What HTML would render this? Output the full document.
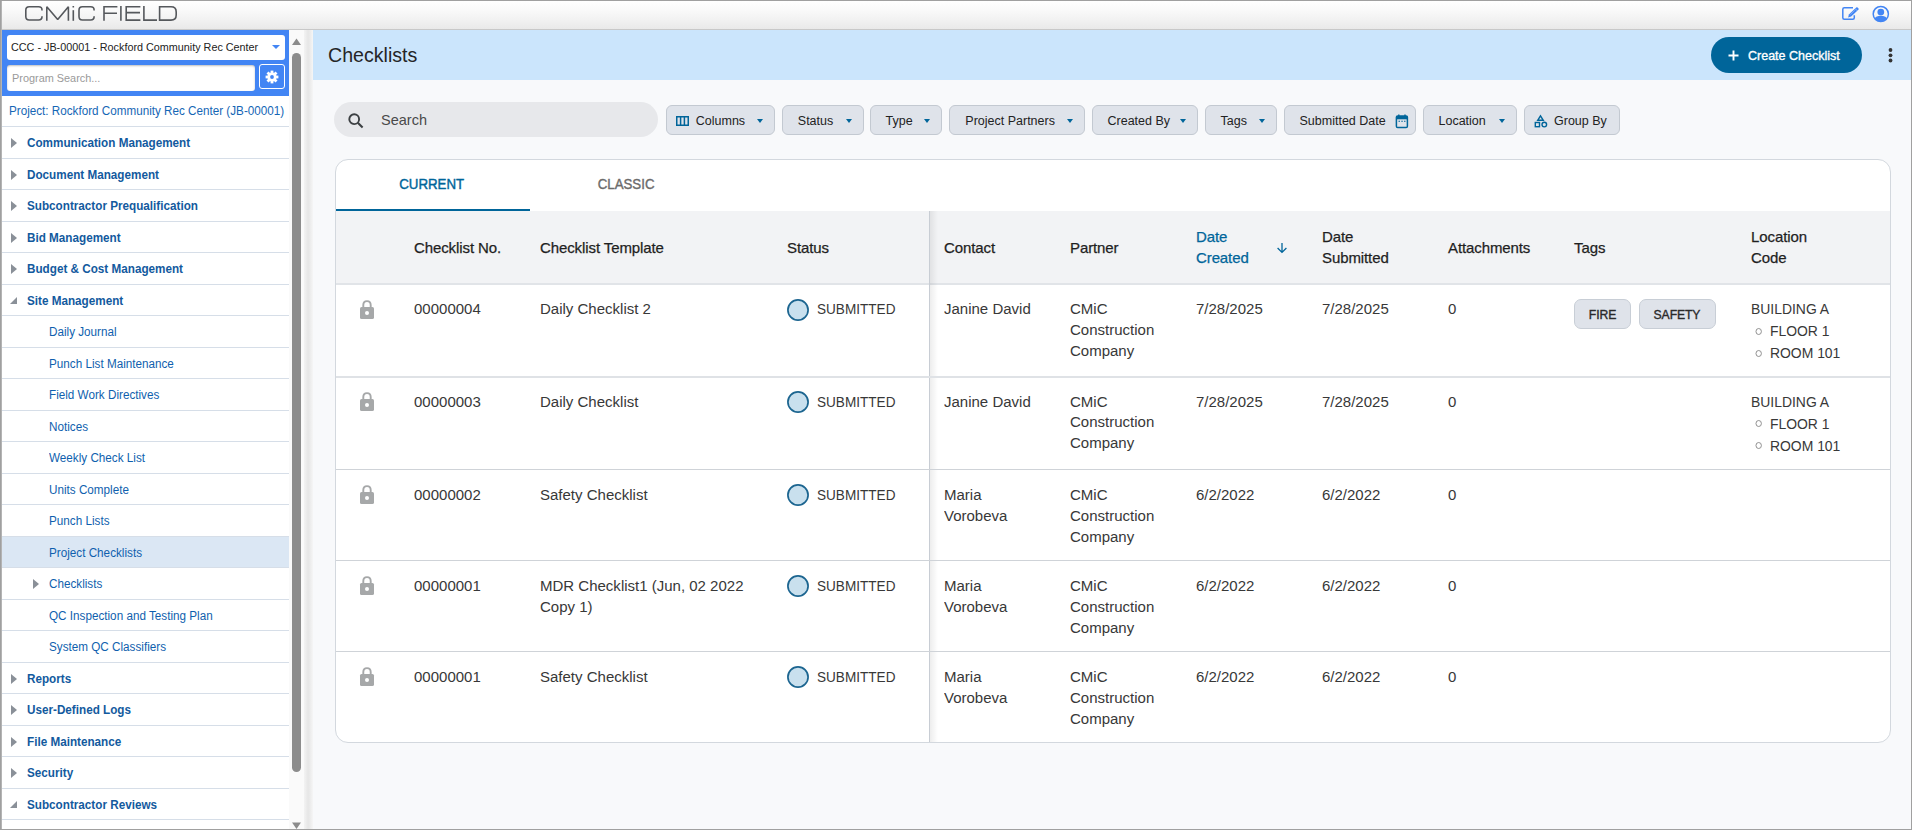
<!DOCTYPE html>
<html>
<head>
<meta charset="utf-8">
<style>
*{box-sizing:border-box;margin:0;padding:0}
html,body{width:1912px;height:830px;overflow:hidden;background:#fff;font-family:"Liberation Sans",sans-serif}
.abs{position:absolute}
#frame{position:absolute;left:0;top:0;width:1912px;height:830px;border:1px solid #a0a0a0;pointer-events:none;z-index:50}
#lb2{position:absolute;left:1px;top:1px;width:1px;height:828px;background:#b4b4b4;z-index:50}
#hdr{position:absolute;left:1px;top:1px;width:1910px;height:29px;background:linear-gradient(#ffffff 0%,#fafafa 30%,#f2f2f2 65%,#e9e9e9 100%);border-bottom:1px solid #c8c8c8}
#side{position:absolute;left:2px;top:30px;width:287px;height:799px;background:#fff;overflow:hidden}
#blue{position:absolute;left:0;top:0;width:287px;height:66px;background:#4285f4}
#sel{position:absolute;left:5px;top:5px;width:278px;height:25px;background:#fff;border-radius:3px;font-size:10.8px;color:#222;line-height:25px;padding-left:4px;white-space:nowrap}
#psearch{position:absolute;left:5px;top:35px;width:248px;height:26px;background:#fff;border-radius:3px;box-shadow:inset 0 1px 2px rgba(0,0,0,.25);font-size:10.9px;color:#9a9a9a;line-height:26px;padding-left:5px}
#gear{position:absolute;left:257px;top:34px;width:26px;height:25px;border:1px solid #fff;border-radius:3px}
.proj{position:absolute;left:0;top:66px;width:287px;height:31px;border-bottom:1px solid #d6dee8;font-size:12px;color:#1566b5;line-height:30px;white-space:nowrap}
.proj span{position:absolute;left:6.5px;top:0;transform:scaleX(.973);transform-origin:0 0}
.mi{position:absolute;left:0;width:287px;height:31.5px;border-bottom:1px solid #d6dee8;font-size:12px;color:#0f5fae;white-space:nowrap}
.mi span{position:absolute;top:0;line-height:32px;transform:scaleX(.975);transform-origin:0 0}
.mi.top span{left:25px;font-weight:bold;color:#135a9e}
.mi.sub span{left:46.5px}
.mi.selbg{background:#dbe7f4}
.tri{position:absolute;width:0;height:0}
.tri.r{border-top:5px solid transparent;border-bottom:5px solid transparent;border-left:6px solid #8a9098}
.tri.d{border-left:7px solid transparent;border-bottom:7px solid #8a9098}
#sbar{position:absolute;left:289px;top:30px;width:15px;height:799px;background:#fafafa}
#thumb{position:absolute;left:3px;top:23px;width:9px;height:719px;background:#8c8c8c;border-radius:5px}
#split{position:absolute;left:304px;top:30px;width:9px;height:799px;background:linear-gradient(90deg,#f3f3f3,#e6e6e6 45%,#e9e9e9 60%,#f6f6f6)}
#main{position:absolute;left:313px;top:30px;width:1598px;height:799px;background:#f8f9fb;overflow:hidden}
#phead{position:absolute;left:0;top:0;width:1598px;height:50px;background:#cbe5fc}
#phead h1{position:absolute;left:15px;top:0;font-weight:normal;font-size:19.6px;line-height:50px;color:#252527}
#create{position:absolute;left:1398px;top:7px;width:151px;height:36px;background:#00659a;border-radius:18px;color:#fff;font-size:12.5px;font-weight:normal;line-height:38.5px;-webkit-text-stroke:0.35px #fff}
#search{position:absolute;left:21px;top:72px;width:324px;height:35px;background:#e7e8eb;border-radius:18px;font-size:14.5px;color:#4a4a4a;line-height:37px}
.chip{position:absolute;top:75px;height:30px;background:#dfe3ea;border:1px solid #c3c9d1;border-radius:6px;font-size:12.5px;color:#222;line-height:30px;white-space:nowrap}
.chip span{position:absolute;top:0}
.caret{position:absolute;top:12.5px;width:0;height:0;border-left:3.5px solid transparent;border-right:3.5px solid transparent;border-top:4px solid #00659a}
#card{position:absolute;left:22px;top:129px;width:1556px;height:584px;background:#fff;border:1px solid #d3d8de;border-radius:13px;overflow:hidden}
.tab{position:absolute;top:0;height:48px;line-height:48px;text-align:center;font-size:15px;font-weight:normal;color:#6b6b6b;-webkit-text-stroke:0.4px #6b6b6b;letter-spacing:0px}
.tab span{display:inline-block;transform:scaleX(.885)}
.tab.cur{color:#00659a;-webkit-text-stroke:0.45px #00659a}
#thead{position:absolute;left:0;top:51px;width:1556px;height:74px;background:#f2f3f5;border-bottom:2px solid #e1e4e8}
#vline{position:absolute;left:593px;top:51px;width:1px;height:532px;background:#c8cdd4}
#vshadow{position:absolute;left:594px;top:51px;width:8px;height:532px;background:linear-gradient(90deg,rgba(0,0,0,.07),rgba(0,0,0,0))}
.th{position:absolute;margin-top:1px;font-size:15px;font-weight:normal;color:#1f1f1f;line-height:20.7px;white-space:nowrap;letter-spacing:-0.1px;-webkit-text-stroke:0.25px #1f1f1f}
.th.sorted{color:#00659a;-webkit-text-stroke:0.25px #00659a}
.rline{position:absolute;left:0;width:1556px;height:1px;background:#cfd3d8}
.td{position:absolute;font-size:15.4px;color:#383838;line-height:20.8px;white-space:nowrap;transform:scaleX(.975);transform-origin:0 0;margin-top:0.5px}
.td.up{transform:scaleX(.904);transform-origin:0 0}
.td.sub{transform:scaleX(.882);transform-origin:0 0}
.loc{line-height:22px;margin-top:-0.5px}
.loc .b{display:inline-block;width:21px;height:0;position:relative}
.loc .b:before{content:'';position:absolute;left:5px;top:-8.5px;width:5.2px;height:5.2px;border:1px solid #8a8a8a;border-radius:50%}
.stat{position:absolute;width:22px;height:22px}
.tag{position:absolute;height:30.5px;background:#dfe3ea;border:1px solid #c8ced6;border-radius:7px;font-size:12.2px;font-weight:normal;color:#2a2a2a;text-align:center;line-height:30.5px;letter-spacing:-0.1px;-webkit-text-stroke:0.35px #2a2a2a}

</style>
</head>
<body>
<div id="hdr"></div><svg class="abs" style="left:0;top:0;z-index:5" width="200" height="29" viewBox="0 0 200 29">
<g fill="none" stroke="#55585c" stroke-width="1.6" stroke-linejoin="miter" stroke-miterlimit="3">
<path d="M42 10.6 V10 Q42 6.8 38.6 6.8 H29.2 Q25.8 6.8 25.8 10.2 V16.6 Q25.8 20 29.2 20 H38.6 Q42 20 42 16.8 V16.2"/>
<path d="M46.8 20.8 V6.8 L57.7 19.6 L68.4 6.8 V20.8" stroke-linejoin="bevel"/>
<path d="M94.1 10.6 V10 Q94.1 6.8 90.7 6.8 H82.4 Q79 6.8 79 10.2 V16.6 Q79 20 82.4 20 H90.7 Q94.1 20 94.1 16.8 V16.2"/>
<path d="M104 20.8 V6.8 H117.4 M104 13.3 H117"/>
<path d="M120.9 6 V20.8"/>
<path d="M140.4 6.8 H126.2 V20.1 H140.4 M126.2 12.6 H140"/>
<path d="M143.9 6 V20.1 H157"/>
<path d="M159.6 6.8 V20.1 H171 Q176.2 20.1 176.2 15 V11.9 Q176.2 6.8 171 6.8 Z"/>
</g>
<rect x="72.5" y="10.2" width="1.6" height="10.6" fill="#55585c"/>
<rect x="72.5" y="6" width="1.6" height="1.5" fill="#55585c"/>
</svg>
<svg class="abs" style="left:1838px;top:3px" width="24" height="22" viewBox="0 0 24 22">
<path d="M15 4.8 H6.3 Q4.8 4.8 4.8 6.3 V14.8 Q4.8 16.3 6.3 16.3 H14.8 Q16.3 16.3 16.3 14.8 V12.3" fill="none" stroke="#4285f4" stroke-width="1.5"/>
<path d="M10.1 14.4 L10.9 11.5 L18.2 4.5 Q18.9 3.9 19.6 4.5 L20.4 5.3 Q21 6 20.4 6.7 L13.1 13.6 Z" fill="#4285f4"/>
<path d="M17.1 5.6 L19.3 7.8" stroke="#fff" stroke-width="0.6" opacity="0.8"/>
<path d="M12.3 11.6 L16.8 7.3" stroke="#fff" stroke-width="0.6" opacity="0.5"/>
</svg>
<svg class="abs" style="left:1870px;top:3px" width="22" height="22" viewBox="0 0 22 22">
<circle cx="10.8" cy="11" r="7.6" fill="none" stroke="#4285f4" stroke-width="1.5"/>
<circle cx="10.8" cy="9.1" r="3.4" fill="#4285f4"/>
<path d="M4.6 15.3 Q6 13.3 8.5 13.1 L13.1 13.1 Q15.6 13.3 17 15.3 Q14.6 18.6 10.8 18.6 Q7 18.6 4.6 15.3 Z" fill="#4285f4"/>
</svg>
<div id="side"><div id="blue"><div id="sel">CCC - JB-00001 - Rockford Community Rec Center<div class="tri" style="position:absolute;left:265px;top:10px;border-left:4px solid transparent;border-right:4px solid transparent;border-top:4.5px solid #4285f4"></div></div><div id="psearch">Program Search...</div><div id="gear"><svg style="position:absolute;left:5px;top:5px" width="14" height="14" viewBox="0 0 14 14"><g fill="#fff"><circle cx="7" cy="7" r="4.6"/><rect x="5.6" y="0.6" width="2.8" height="3" transform="rotate(0 7 7)"/><rect x="5.6" y="0.6" width="2.8" height="3" transform="rotate(45 7 7)"/><rect x="5.6" y="0.6" width="2.8" height="3" transform="rotate(90 7 7)"/><rect x="5.6" y="0.6" width="2.8" height="3" transform="rotate(135 7 7)"/><rect x="5.6" y="0.6" width="2.8" height="3" transform="rotate(180 7 7)"/><rect x="5.6" y="0.6" width="2.8" height="3" transform="rotate(225 7 7)"/><rect x="5.6" y="0.6" width="2.8" height="3" transform="rotate(270 7 7)"/><rect x="5.6" y="0.6" width="2.8" height="3" transform="rotate(315 7 7)"/></g><circle cx="7" cy="7" r="1.9" fill="#4285f4"/></svg></div></div><div class="proj"><span>Project: Rockford Community Rec Center (JB-00001)</span></div><div class="mi top" style="top:97.0px"><div class="tri r" style="left:9px;top:11px"></div><span>Communication Management</span></div><div class="mi top" style="top:128.5px"><div class="tri r" style="left:9px;top:11px"></div><span>Document Management</span></div><div class="mi top" style="top:160.0px"><div class="tri r" style="left:9px;top:11px"></div><span>Subcontractor Prequalification</span></div><div class="mi top" style="top:191.5px"><div class="tri r" style="left:9px;top:11px"></div><span>Bid Management</span></div><div class="mi top" style="top:223.0px"><div class="tri r" style="left:9px;top:11px"></div><span>Budget &amp; Cost Management</span></div><div class="mi top" style="top:254.5px"><div class="tri d" style="left:8px;top:12px"></div><span>Site Management</span></div><div class="mi sub" style="top:286.0px"><span>Daily Journal</span></div><div class="mi sub" style="top:317.5px"><span>Punch List Maintenance</span></div><div class="mi sub" style="top:349.0px"><span>Field Work Directives</span></div><div class="mi sub" style="top:380.5px"><span>Notices</span></div><div class="mi sub" style="top:412.0px"><span>Weekly Check List</span></div><div class="mi sub" style="top:443.5px"><span>Units Complete</span></div><div class="mi sub" style="top:475.0px"><span>Punch Lists</span></div><div class="mi sub selbg" style="top:506.5px"><span>Project Checklists</span></div><div class="mi sub" style="top:538.0px"><div class="tri r" style="left:31px;top:11px"></div><span>Checklists</span></div><div class="mi sub" style="top:569.5px"><span>QC Inspection and Testing Plan</span></div><div class="mi sub" style="top:601.0px"><span>System QC Classifiers</span></div><div class="mi top" style="top:632.5px"><div class="tri r" style="left:9px;top:11px"></div><span>Reports</span></div><div class="mi top" style="top:664.0px"><div class="tri r" style="left:9px;top:11px"></div><span>User-Defined Logs</span></div><div class="mi top" style="top:695.5px"><div class="tri r" style="left:9px;top:11px"></div><span>File Maintenance</span></div><div class="mi top" style="top:727.0px"><div class="tri r" style="left:9px;top:11px"></div><span>Security</span></div><div class="mi top" style="top:758.5px"><div class="tri d" style="left:8px;top:12px"></div><span>Subcontractor Reviews</span></div><div class="mi top" style="top:790.0px"><span></span></div></div>
<div id="sbar"><svg class="abs" style="left:0;top:0" width="15" height="20"><path d="M3 15 L7.5 8.5 L12 15 Z" fill="#8c8c8c"/></svg><div id="thumb"></div><svg class="abs" style="left:0;top:786px" width="15" height="14"><path d="M3 6.5 L12 6.5 L7.5 13 Z" fill="#8c8c8c"/></svg></div>
<div id="split"></div>
<div id="main"><div id="phead"><h1>Checklists</h1><div id="create"><svg class="abs" style="left:17px;top:13px" width="11" height="11"><path d="M5.5 0.5 V10.5 M0.5 5.5 H10.5" stroke="#fff" stroke-width="1.9"/></svg><span class="abs" style="left:37px;top:0">Create Checklist</span></div><svg class="abs" style="left:1571px;top:15px" width="12" height="20"><circle cx="6.5" cy="5" r="1.9" fill="#333"/><circle cx="6.5" cy="10.3" r="1.9" fill="#333"/><circle cx="6.5" cy="15.5" r="1.9" fill="#333"/></svg></div><div id="search"><svg class="abs" style="left:13px;top:10px" width="18" height="18" viewBox="0 0 18 18"><circle cx="7.2" cy="7.2" r="4.9" fill="none" stroke="#3c4043" stroke-width="1.9"/><path d="M10.8 10.8 L15.6 15.6" stroke="#3c4043" stroke-width="2.1"/></svg><span class="abs" style="left:47px;top:0">Search</span></div><div class="chip" style="left:353px;width:109px"><span style="left:28.799999999999955px">Columns</span><div class="caret" style="left:89.5px"></div><svg class="abs" style="left:9px;top:10px" width="14" height="11"><rect x="0.75" y="0.75" width="11.5" height="8.5" fill="none" stroke="#00659a" stroke-width="1.5"/><path d="M4.6 1 V9 M8.4 1 V9" stroke="#00659a" stroke-width="1.5"/></svg></div><div class="chip" style="left:469px;width:82px"><span style="left:14.799999999999955px">Status</span><div class="caret" style="left:62.5px"></div></div><div class="chip" style="left:557px;width:72px"><span style="left:14.5px">Type</span><div class="caret" style="left:52.5px"></div></div><div class="chip" style="left:636px;width:136px"><span style="left:15.299999999999955px">Project Partners</span><div class="caret" style="left:116.5px"></div></div><div class="chip" style="left:779px;width:106px"><span style="left:14.5px">Created By</span><div class="caret" style="left:86.5px"></div></div><div class="chip" style="left:892px;width:72px"><span style="left:14.5px">Tags</span><div class="caret" style="left:52.5px"></div></div><div class="chip" style="left:971px;width:132px"><span style="left:14.5px">Submitted Date</span><svg class="abs" style="left:110px;top:7px" width="14" height="16" viewBox="0 0 14 16"><rect x="1.4" y="3" width="11" height="11.5" rx="1.3" fill="none" stroke="#00659a" stroke-width="1.5"/><rect x="1.4" y="3" width="11" height="3.3" fill="#00659a"/><path d="M3.8 1.5 V4 M10 1.5 V4" stroke="#00659a" stroke-width="1.4"/><path d="M3.5 8.2 H5 M6.3 8.2 H7.8 M9 8.2 H10.5" stroke="#00659a" stroke-width="1.1"/></svg></div><div class="chip" style="left:1110px;width:94px"><span style="left:14.5px">Location</span><div class="caret" style="left:74.5px"></div></div><div class="chip" style="left:1211px;width:96px"><span style="left:29px">Group By</span><svg class="abs" style="left:9px;top:8px" width="14" height="15" viewBox="0 0 14 15"><path d="M6.5 1.8 L9.3 6.3 H3.7 Z" fill="none" stroke="#00659a" stroke-width="1.4"/><rect x="1.3" y="8.5" width="4.2" height="4.2" fill="none" stroke="#00659a" stroke-width="1.4"/><circle cx="10.3" cy="10.6" r="2.3" fill="none" stroke="#00659a" stroke-width="1.4"/></svg></div><div id="card"><div class="tab cur" style="left:-1px;width:194px"><span>CURRENT</span></div><div class="tab" style="left:193px;width:194px"><span>CLASSIC</span></div><div class="abs" style="left:0;top:49px;width:194px;height:2px;background:#00659a"></div><div id="thead"></div><div id="vline"></div><div id="vshadow"></div><div class="th" style="left:78px;top:77px">Checklist No.</div><div class="th" style="left:204px;top:77px">Checklist Template</div><div class="th" style="left:451px;top:77px">Status</div><div class="th" style="left:608px;top:77px">Contact</div><div class="th" style="left:734px;top:77px">Partner</div><div class="th sorted" style="left:860px;top:66px">Date<br>Created</div><div class="th" style="left:986px;top:66px">Date<br>Submitted</div><div class="th" style="left:1112px;top:77px">Attachments</div><div class="th" style="left:1238px;top:77px">Tags</div><div class="th" style="left:1415px;top:66px">Location<br>Code</div><svg class="abs" style="left:938px;top:80px" width="16" height="16" viewBox="0 0 16 16"><path d="M8 3 V12.3 M3.6 8 L8 12.4 L12.4 8" fill="none" stroke="#00659a" stroke-width="1.3"/></svg><div class="rline" style="top:216px;height:2px;background:#dfe2e6"></div><svg class="abs" style="left:23px;top:138.5px" width="16" height="22" viewBox="0 0 16 22"><path d="M4.3 8 V6 Q4.3 2.1 8 2.1 Q11.7 2.1 11.7 6 V8" fill="none" stroke="#a6a8a9" stroke-width="1.9"/><rect x="1" y="8" width="14" height="12" rx="1.6" fill="#a6a8a9"/><circle cx="8" cy="14" r="2" fill="#fff"/></svg><div class="td" style="left:78px;top:138.5px">00000004</div><div class="td" style="left:204px;top:138.5px">Daily Checklist 2</div><svg class="stat" style="left:451px;top:138.5px" viewBox="0 0 22 22"><circle cx="11" cy="11" r="10.1" fill="#c9e0ee" stroke="#1c6590" stroke-width="1.7"/></svg><div class="td sub" style="left:480.5px;top:138.5px">SUBMITTED</div><div class="td" style="left:608px;top:138.5px">Janine David</div><div class="td" style="left:734px;top:138.5px">CMiC<br>Construction<br>Company</div><div class="td" style="left:860px;top:138.5px">7/28/2025</div><div class="td" style="left:986px;top:138.5px">7/28/2025</div><div class="td" style="left:1112px;top:138.5px">0</div><div class="tag" style="left:1238px;top:138.5px;width:57px">FIRE</div><div class="tag" style="left:1302.5px;top:138.5px;width:77px">SAFETY</div><div class="td up loc" style="left:1415px;top:138.5px">BUILDING A<br><span class="b"></span>FLOOR 1<br><span class="b"></span>ROOM 101</div><div class="rline" style="top:309px"></div><svg class="abs" style="left:23px;top:231px" width="16" height="22" viewBox="0 0 16 22"><path d="M4.3 8 V6 Q4.3 2.1 8 2.1 Q11.7 2.1 11.7 6 V8" fill="none" stroke="#a6a8a9" stroke-width="1.9"/><rect x="1" y="8" width="14" height="12" rx="1.6" fill="#a6a8a9"/><circle cx="8" cy="14" r="2" fill="#fff"/></svg><div class="td" style="left:78px;top:231px">00000003</div><div class="td" style="left:204px;top:231px">Daily Checklist</div><svg class="stat" style="left:451px;top:231px" viewBox="0 0 22 22"><circle cx="11" cy="11" r="10.1" fill="#c9e0ee" stroke="#1c6590" stroke-width="1.7"/></svg><div class="td sub" style="left:480.5px;top:231px">SUBMITTED</div><div class="td" style="left:608px;top:231px">Janine David</div><div class="td" style="left:734px;top:231px">CMiC<br>Construction<br>Company</div><div class="td" style="left:860px;top:231px">7/28/2025</div><div class="td" style="left:986px;top:231px">7/28/2025</div><div class="td" style="left:1112px;top:231px">0</div><div class="td up loc" style="left:1415px;top:231px">BUILDING A<br><span class="b"></span>FLOOR 1<br><span class="b"></span>ROOM 101</div><div class="rline" style="top:400px"></div><svg class="abs" style="left:23px;top:323.5px" width="16" height="22" viewBox="0 0 16 22"><path d="M4.3 8 V6 Q4.3 2.1 8 2.1 Q11.7 2.1 11.7 6 V8" fill="none" stroke="#a6a8a9" stroke-width="1.9"/><rect x="1" y="8" width="14" height="12" rx="1.6" fill="#a6a8a9"/><circle cx="8" cy="14" r="2" fill="#fff"/></svg><div class="td" style="left:78px;top:324.5px">00000002</div><div class="td" style="left:204px;top:324.5px">Safety Checklist</div><svg class="stat" style="left:451px;top:323.5px" viewBox="0 0 22 22"><circle cx="11" cy="11" r="10.1" fill="#c9e0ee" stroke="#1c6590" stroke-width="1.7"/></svg><div class="td sub" style="left:480.5px;top:324.5px">SUBMITTED</div><div class="td" style="left:608px;top:324.5px">Maria<br>Vorobeva</div><div class="td" style="left:734px;top:324.5px">CMiC<br>Construction<br>Company</div><div class="td" style="left:860px;top:324.5px">6/2/2022</div><div class="td" style="left:986px;top:324.5px">6/2/2022</div><div class="td" style="left:1112px;top:324.5px">0</div><div class="rline" style="top:491px"></div><svg class="abs" style="left:23px;top:414.5px" width="16" height="22" viewBox="0 0 16 22"><path d="M4.3 8 V6 Q4.3 2.1 8 2.1 Q11.7 2.1 11.7 6 V8" fill="none" stroke="#a6a8a9" stroke-width="1.9"/><rect x="1" y="8" width="14" height="12" rx="1.6" fill="#a6a8a9"/><circle cx="8" cy="14" r="2" fill="#fff"/></svg><div class="td" style="left:78px;top:415.5px">00000001</div><div class="td" style="left:204px;top:415.5px">MDR Checklist1 (Jun, 02 2022<br>Copy 1)</div><svg class="stat" style="left:451px;top:414.5px" viewBox="0 0 22 22"><circle cx="11" cy="11" r="10.1" fill="#c9e0ee" stroke="#1c6590" stroke-width="1.7"/></svg><div class="td sub" style="left:480.5px;top:415.5px">SUBMITTED</div><div class="td" style="left:608px;top:415.5px">Maria<br>Vorobeva</div><div class="td" style="left:734px;top:415.5px">CMiC<br>Construction<br>Company</div><div class="td" style="left:860px;top:415.5px">6/2/2022</div><div class="td" style="left:986px;top:415.5px">6/2/2022</div><div class="td" style="left:1112px;top:415.5px">0</div><svg class="abs" style="left:23px;top:505.5px" width="16" height="22" viewBox="0 0 16 22"><path d="M4.3 8 V6 Q4.3 2.1 8 2.1 Q11.7 2.1 11.7 6 V8" fill="none" stroke="#a6a8a9" stroke-width="1.9"/><rect x="1" y="8" width="14" height="12" rx="1.6" fill="#a6a8a9"/><circle cx="8" cy="14" r="2" fill="#fff"/></svg><div class="td" style="left:78px;top:506.5px">00000001</div><div class="td" style="left:204px;top:506.5px">Safety Checklist</div><svg class="stat" style="left:451px;top:505.5px" viewBox="0 0 22 22"><circle cx="11" cy="11" r="10.1" fill="#c9e0ee" stroke="#1c6590" stroke-width="1.7"/></svg><div class="td sub" style="left:480.5px;top:506.5px">SUBMITTED</div><div class="td" style="left:608px;top:506.5px">Maria<br>Vorobeva</div><div class="td" style="left:734px;top:506.5px">CMiC<br>Construction<br>Company</div><div class="td" style="left:860px;top:506.5px">6/2/2022</div><div class="td" style="left:986px;top:506.5px">6/2/2022</div><div class="td" style="left:1112px;top:506.5px">0</div></div></div>
<div id="frame"></div><div id="lb2"></div>
</body>
</html>
